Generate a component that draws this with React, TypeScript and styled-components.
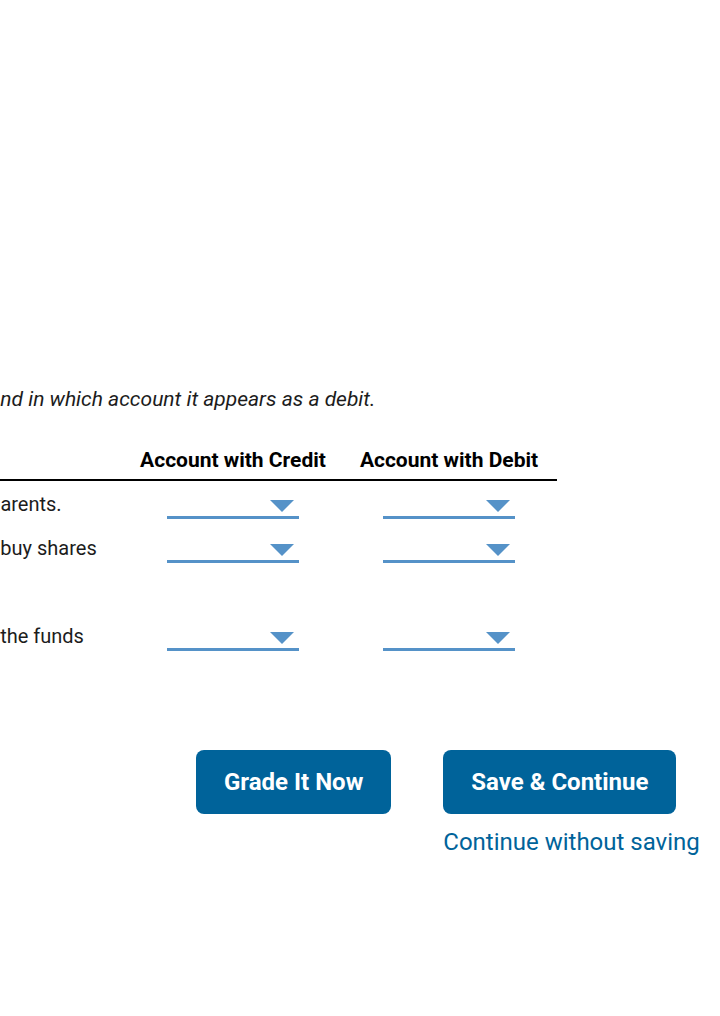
import React from "react";
import styled, { createGlobalStyle } from "styled-components";

const GlobalStyle = createGlobalStyle`
  body {
    margin: 0;
    font-family: Roboto, "Liberation Sans", sans-serif;
    color: #1c1c1c;
    background: #fff;
  }
`;

// the page is scrolled sideways: the left part of the question sits outside the window
const SCROLL_X = 475;
const DESC_WIDTH = SCROLL_X + 125;

const rows = [
  { id: "r1", lines: ["On March 1, Ava borrowed $15,000 in cash from her parents."] },
  {
    id: "r2",
    lines: [
      "Lily used $500 of the cash in the business account to buy shares",
      "of stock in a local",
      "company.",
    ],
  },
  { id: "r3", lines: ["Chloe purchased equipment for $1,500 in cash, using the funds"] },
];

const Viewport = styled.div`
  width: 720px;
  min-height: 1016px;
  overflow: hidden;
`;

const Sheet = styled.div`
  margin-left: -${SCROLL_X}px;
  padding-top: 388px;
`;

const Instruction = styled.p`
  margin: 0 0 31px;
  font-size: 21px;
  line-height: 22px;
  font-style: italic;
  white-space: nowrap;
`;

const Table = styled.div`
  width: max-content;
`;

const Row = styled.div<{ $head?: boolean }>`
  display: grid;
  grid-template-columns: ${DESC_WIDTH}px 216px 216px;
  ${({ $head }) => $head && "border-bottom: 2px solid #000;"}
`;

const HeadCell = styled.div`
  padding: 8px 0;
  font-size: 21px;
  line-height: 22px;
  font-weight: 700;
  color: #000;
  text-align: center;
`;

const DescCell = styled.div`
  padding: 12px 0 10px;
  font-size: 20px;
  line-height: 22px;
  white-space: nowrap;
`;

const SelectCell = styled.div`
  padding-top: 8px;
  display: flex;
  justify-content: center;
`;

const Dropdown = styled.div`
  position: relative;
  width: 132px;
  height: 27px;
  border-bottom: 3px solid #5592c8;
  cursor: pointer;
`;

const Caret = styled.span`
  position: absolute;
  right: 5px;
  bottom: 4px;
  width: 0;
  height: 0;
  border-left: 12.5px solid transparent;
  border-right: 12.5px solid transparent;
  border-top: 12px solid #5592c8;
`;

const ButtonBar = styled.div`
  display: flex;
  gap: 52px;
  align-items: flex-start;
  padding-left: 196px;
  margin-top: 93px;
`;

const ActionButton = styled.button`
  height: 64px;
  padding: 0 28px;
  border: none;
  border-radius: 8px;
  background: #00639a;
  color: #fff;
  font-family: Roboto, "Liberation Sans", sans-serif;
  font-size: 24px;
  font-weight: 700;
  cursor: pointer;
`;

const SaveGroup = styled.div`
  display: flex;
  flex-direction: column;
  align-items: flex-start;
  gap: 14px;
`;

const TextLink = styled.a`
  font-size: 24px;
  line-height: 28px;
  color: #00639a;
  white-space: nowrap;
  text-decoration: none;
  cursor: pointer;
`;

const Select = () => (
  <SelectCell>
    <Dropdown>
      <Caret />
    </Dropdown>
  </SelectCell>
);

export default function App() {
  return (
    <Viewport>
      <GlobalStyle />
      <Sheet>
        <Instruction>
          Indicate the account in which it appears as a credit and in which account it appears as a debit.
        </Instruction>
        <Table>
          <Row $head>
            <HeadCell />
            <HeadCell>Account with Credit</HeadCell>
            <HeadCell>Account with Debit</HeadCell>
          </Row>
          {rows.map((row) => (
            <Row key={row.id}>
              <DescCell>
                {row.lines.map((line, i) => (
                  <React.Fragment key={i}>
                    {i > 0 && <br />}
                    {line}
                  </React.Fragment>
                ))}
              </DescCell>
              <Select />
              <Select />
            </Row>
          ))}
        </Table>
      </Sheet>
      <ButtonBar>
        <ActionButton>Grade It Now</ActionButton>
        <SaveGroup>
          <ActionButton>Save &amp; Continue</ActionButton>
          <TextLink>Continue without saving</TextLink>
        </SaveGroup>
      </ButtonBar>
    </Viewport>
  );
}
